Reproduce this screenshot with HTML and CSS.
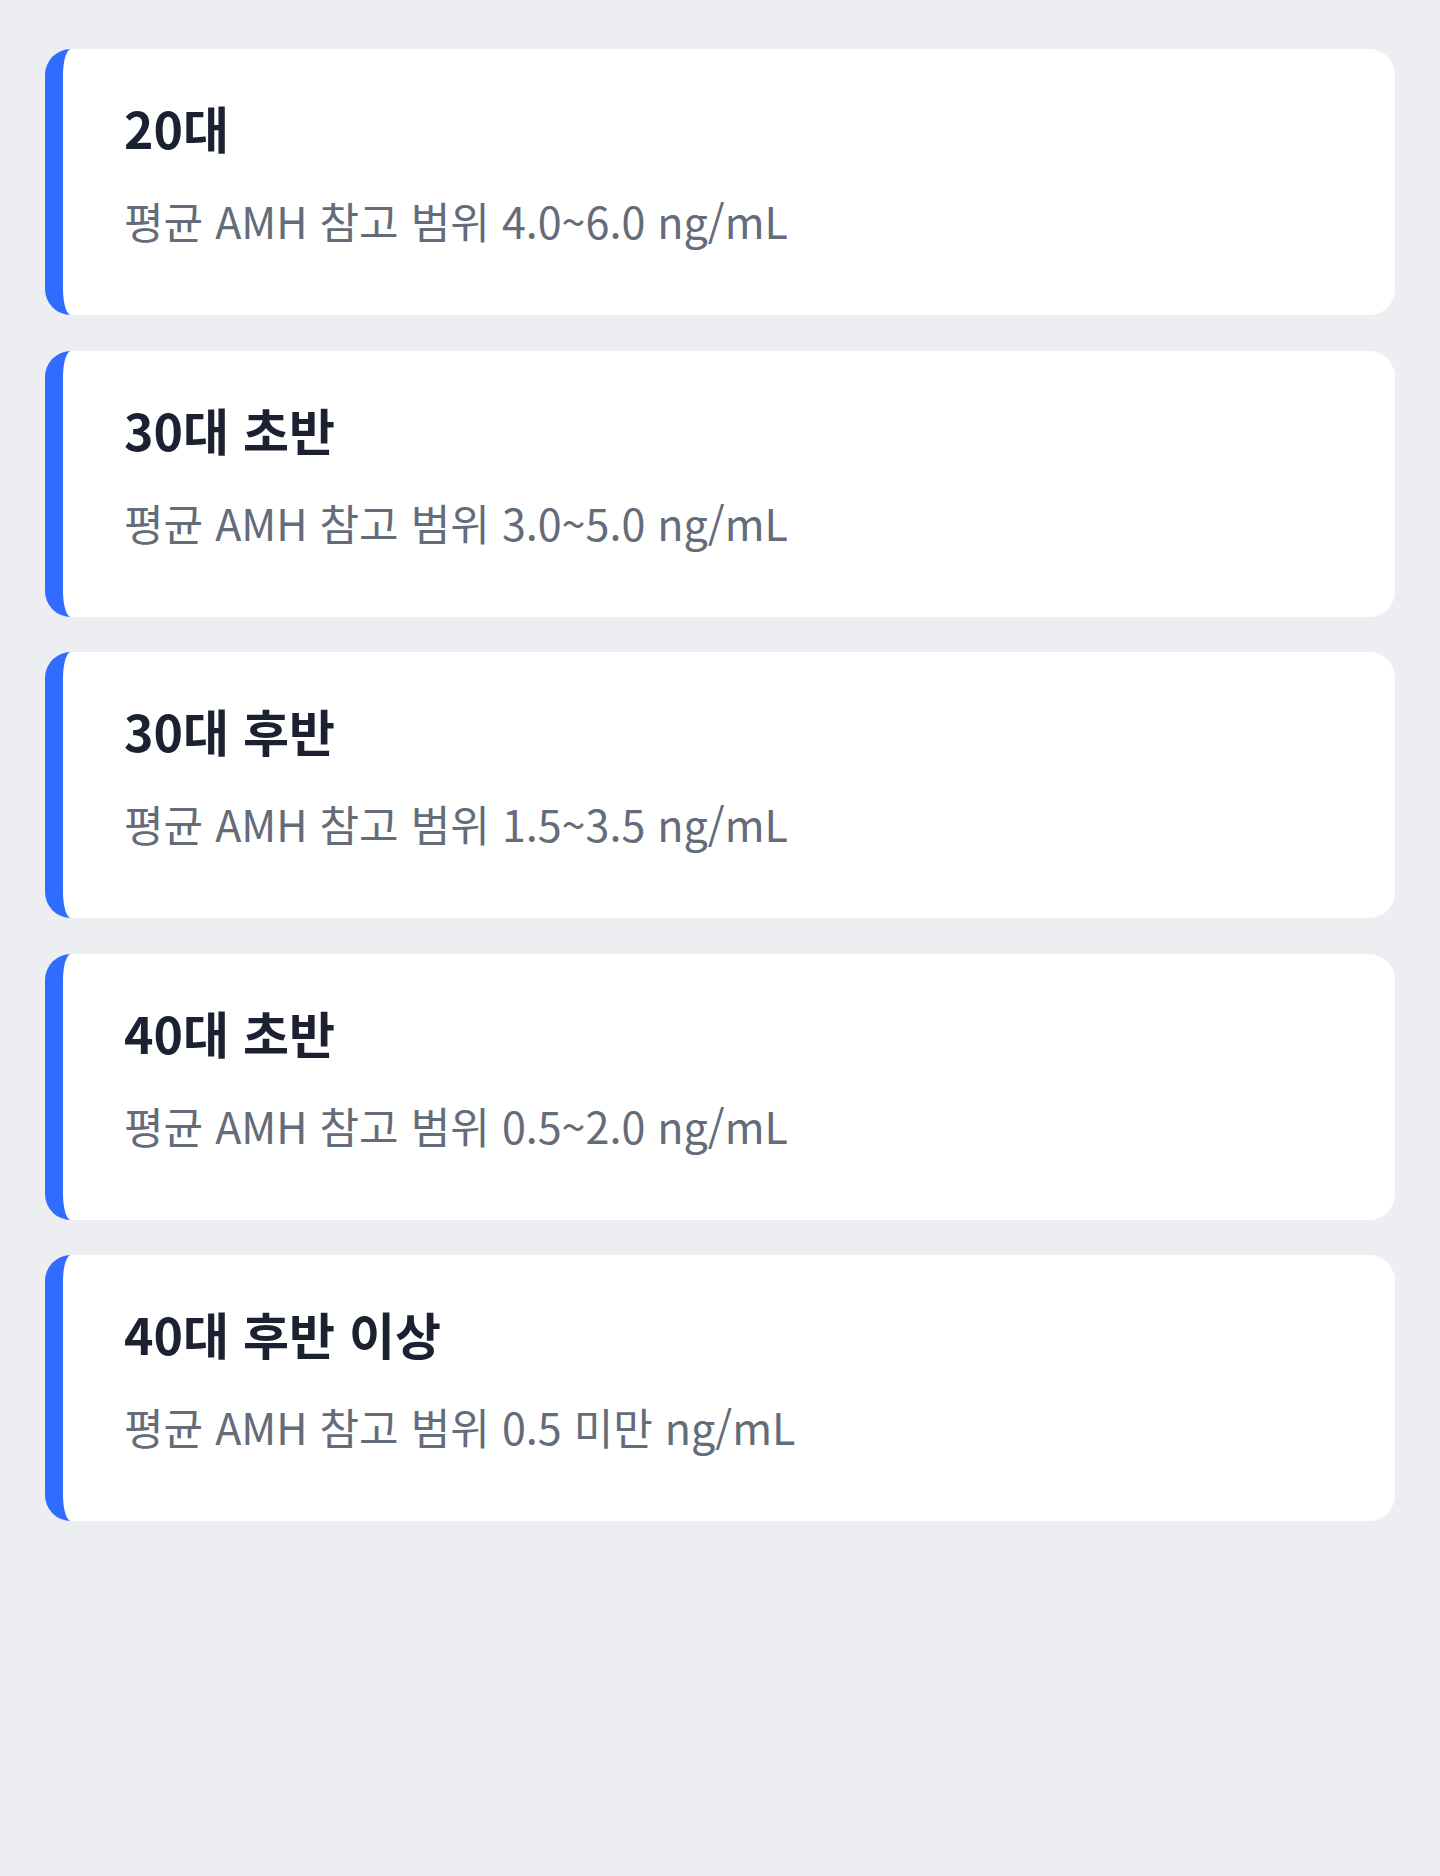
FILE: index.html
```html
<!DOCTYPE html>
<html lang="ko">
<head>
<meta charset="utf-8">
<title>AMH 참고 범위</title>
<link rel="stylesheet" href="styles.css">
</head>
<body>
<main class="list">
  <section class="card">
    <h2 class="card-title">20대</h2>
    <p class="card-desc">평균 AMH 참고 범위 4.0~6.0 ng/mL</p>
  </section>
  <section class="card">
    <h2 class="card-title">30대 초반</h2>
    <p class="card-desc">평균 AMH 참고 범위 3.0~5.0 ng/mL</p>
  </section>
  <section class="card">
    <h2 class="card-title">30대 후반</h2>
    <p class="card-desc">평균 AMH 참고 범위 1.5~3.5 ng/mL</p>
  </section>
  <section class="card">
    <h2 class="card-title">40대 초반</h2>
    <p class="card-desc">평균 AMH 참고 범위 0.5~2.0 ng/mL</p>
  </section>
  <section class="card">
    <h2 class="card-title">40대 후반 이상</h2>
    <p class="card-desc">평균 AMH 참고 범위 0.5 미만 ng/mL</p>
  </section>
</main>
</body>
</html>
```

FILE: styles.css
```css
html, body {
  margin: 0;
  padding: 0;
}
body {
  background: #eceef2;
  font-family: "Noto Sans CJK KR", "Noto Sans", sans-serif;
  min-height: 1876px;
}
.list {
  display: flex;
  flex-direction: column;
  gap: 35.5px;
  padding: 49px 45px 0;
}
.card {
  background: #ffffff;
  border-left: 18px solid #2f6cff;
  border-radius: 26px;
  height: 266px;
  box-sizing: border-box;
  padding: 48px 40px 0 61px;
}
.card-title {
  margin: 0;
  font-size: 50px;
  line-height: 60px;
  font-weight: 700;
  color: #1b2130;
  letter-spacing: 0;
}
.card-desc {
  margin: 35px 0 0;
  font-size: 43px;
  line-height: 56px;
  font-weight: 400;
  color: #646b79;
  letter-spacing: 0;
}
```
